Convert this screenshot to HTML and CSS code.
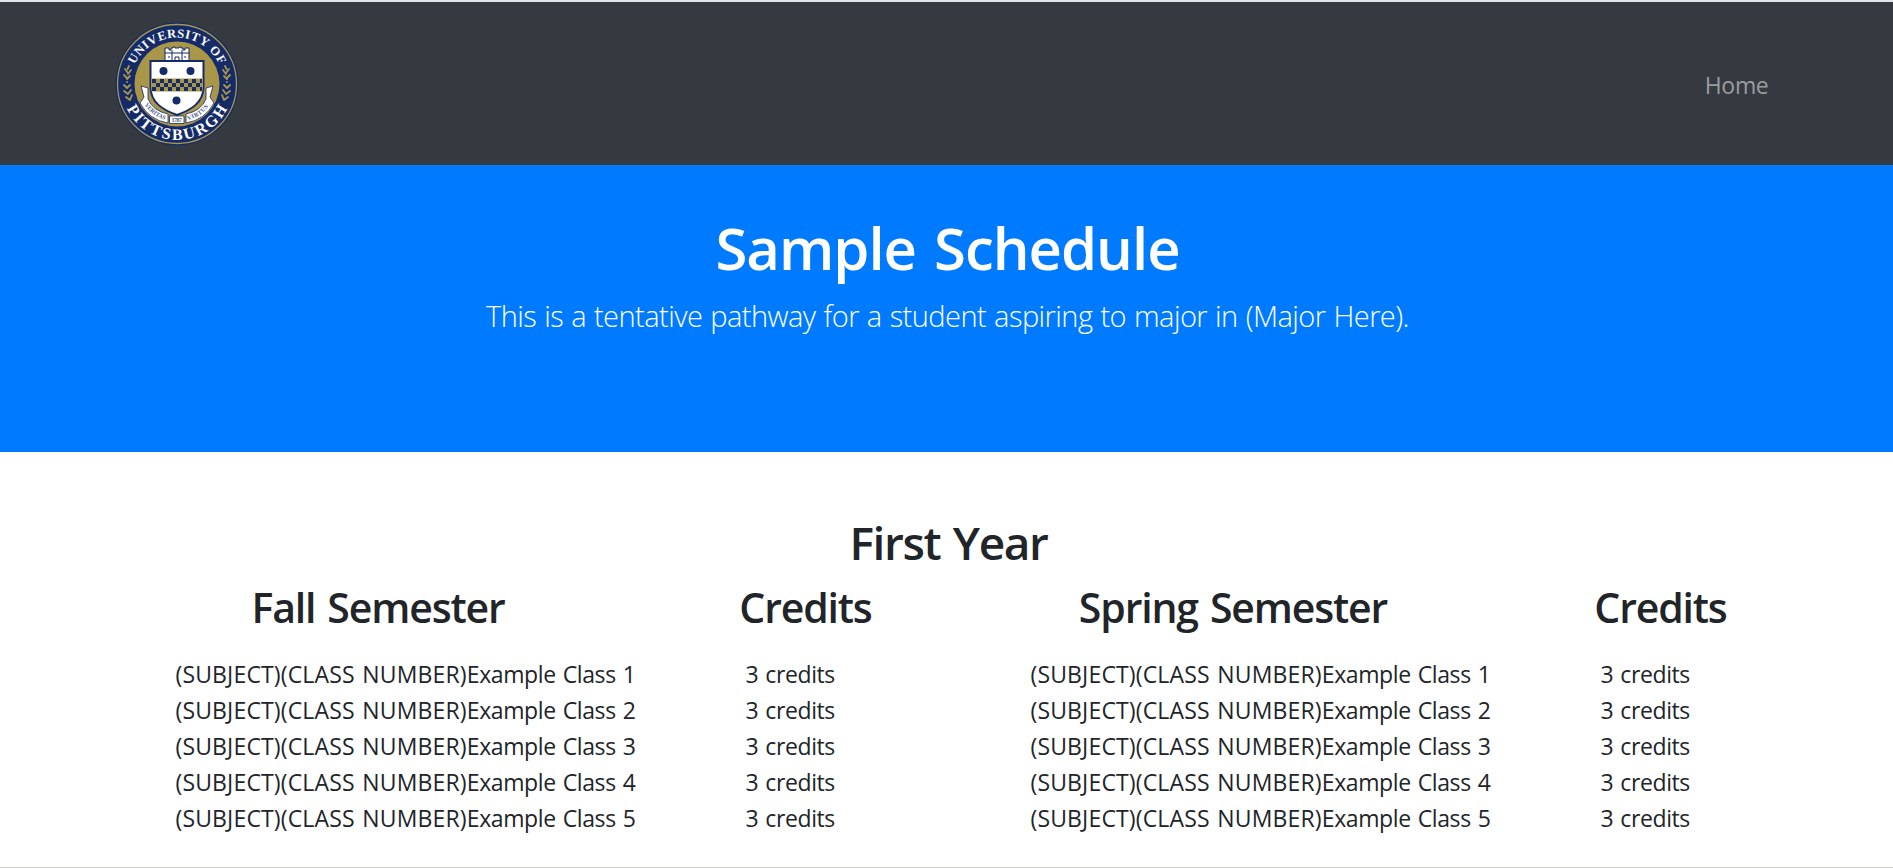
FILE: index.html
```html
<!DOCTYPE html>
<html lang="en">
<head>
<meta charset="utf-8">
<title>Sample Schedule</title>
<link rel="stylesheet" href="styles.css">
</head>
<body>
<nav class="navbar">
  <div class="container navbar-inner">
    <a class="brand" aria-label="University of Pittsburgh">
      <svg class="seal" viewBox="0 0 124 124">
        <defs>
          <path id="top-arc" d="M15.500 62a46.500 46.500 0 0 1 93 0"/>
          <path id="bottom-arc" d="M6 62a56 56 0 0 0 112 0"/>
          <path id="motto-left" d="M28.500 81Q36 94 52 98.500"/>
          <path id="motto-right" d="M72 98.500Q88 94 95.500 81"/>
          <pattern id="checks" width="8" height="8" patternUnits="userSpaceOnUse" x="37" y="57"><path fill="#142c68" d="M0 0h4v4h4v4h-4v-4h-4z"/></pattern>
        </defs>
        <circle cx="62" cy="62" r="61.500" fill="#142b67"/>
        <circle cx="62" cy="62" r="59.500" fill="none" stroke="#a8954f" stroke-width="1.300"/>
        <circle cx="62" cy="62" r="42.500" fill="#a99648"/>
        <text class="seal-top"><textPath href="#top-arc" startOffset="50%" text-anchor="middle" textLength="106">UNIVERSITY OF</textPath></text>
        <text class="seal-bottom"><textPath href="#bottom-arc" startOffset="50%" text-anchor="middle" textLength="125">PITTSBURGH</textPath></text>
        <g fill="none" stroke="#a99648" stroke-width="1.800" stroke-linecap="round">
          <path d="M14 44l-1.500 3M10 47l3 4M16 48l-3 4M9 53l3 3M15 54l-3 3M12 60l.1 0M9 63l3 3M15 63l-3 3M9 69l4 3M16 68l-3 4M11 75l4 3M17 73l-2 5"/>
          <path d="M110 44l1.500 3M114 47l-3 4M108 48l3 4M115 53l-3 3M109 54l3 3M112 60l-.1 0M115 63l-3 3M109 63l3 3M115 69l-4 3M108 68l3 4M113 75l-4 3M107 73l2 5"/>
        </g>
        <path d="M50 40V26h4v2h2v-2h2v-1h2v1h4v-1h2v1h2v2h2v-2h4v14z" fill="#fff" stroke="#142b67"/>
        <path d="M50 31h7M67 31h7M57 28v11M67 28v11M57 31h10M60 40v-5h4v5M53 35h2M69 35h2" fill="none" stroke="#142b67"/>
        <path d="M35.500 39h53v26c0 16-13 23-26.500 28C48.500 88 35.500 81 35.500 65z" fill="#fff" stroke="#142b67" stroke-width="2"/>
        <path d="M36.500 56.500h51v13h-51z" fill="#a99648"/>
        <path d="M37 57h50v12H37z" fill="url(#checks)"/>
        <g fill="#142b67"><circle cx="48.500" cy="49" r="4"/><circle cx="75.500" cy="49" r="4"/><circle cx="61.500" cy="78.500" r="4"/></g>
        <path d="M29 75L26 64l7 2v11q5 12 20 15v9Q34 98 25 81zM95 75l3-11-7 2v11q-5 12-20 15v9Q90 98 99 81z" fill="#fff" stroke="#142b67" stroke-width=".8"/>
        <path d="M54.500 94h14.500v7.500H54.500z" fill="#fff" stroke="#142b67" stroke-width=".8"/>
        <text class="seal-motto"><textPath href="#motto-left" textLength="26" startOffset="2">VERITAS</textPath></text>
        <text class="seal-motto"><textPath href="#motto-right" textLength="25" startOffset="1">VIRTUS</textPath></text>
        <text class="seal-motto" x="56.500" y="99.800" textLength="10.500">1787</text>
      </svg>
    </a>
    <a class="nav-link">Home</a>
  </div>
</nav>
<header class="hero">
  <h1>Sample Schedule</h1>
  <p class="lead">This is a tentative pathway for a student aspiring to major in (Major Here).</p>
</header>
<main class="container schedule">
  <h2>First Year</h2>
  <div class="semesters">
    <section class="col">
      <h3>Fall Semester</h3>
      <ul>
        <li><span class="code">(SUBJECT)(CLASS NUMBER)</span>Example Class 1</li>
        <li><span class="code">(SUBJECT)(CLASS NUMBER)</span>Example Class 2</li>
        <li><span class="code">(SUBJECT)(CLASS NUMBER)</span>Example Class 3</li>
        <li><span class="code">(SUBJECT)(CLASS NUMBER)</span>Example Class 4</li>
        <li><span class="code">(SUBJECT)(CLASS NUMBER)</span>Example Class 5</li>
      </ul>
    </section>
    <section class="col">
      <h3>Credits</h3>
      <ul><li>3 credits</li><li>3 credits</li><li>3 credits</li><li>3 credits</li><li>3 credits</li></ul>
    </section>
    <section class="col">
      <h3>Spring Semester</h3>
      <ul>
        <li><span class="code">(SUBJECT)(CLASS NUMBER)</span>Example Class 1</li>
        <li><span class="code">(SUBJECT)(CLASS NUMBER)</span>Example Class 2</li>
        <li><span class="code">(SUBJECT)(CLASS NUMBER)</span>Example Class 3</li>
        <li><span class="code">(SUBJECT)(CLASS NUMBER)</span>Example Class 4</li>
        <li><span class="code">(SUBJECT)(CLASS NUMBER)</span>Example Class 5</li>
      </ul>
    </section>
    <section class="col">
      <h3>Credits</h3>
      <ul><li>3 credits</li><li>3 credits</li><li>3 credits</li><li>3 credits</li><li>3 credits</li></ul>
    </section>
  </div>
</main>
</body>
</html>
```
FILE: styles.css
```css
* { box-sizing: border-box; }
body {
  margin: 0;
  height: 868px;
  overflow: hidden;
  display: flex;
  flex-direction: column;
  border-top: 2px solid #e3e7ea;
  border-bottom: 1px solid #cfcfcb;
  background: #fff;
  color: #212529;
  font: 400 23px/36px "Open Sans", "Noto Sans", sans-serif;
}
.container { width: 1710px; margin: 0 auto; }
.navbar { height: 163px; flex: none; background: #343a40; }
.navbar-inner { height: 100%; display: flex; align-items: center; justify-content: space-between; padding: 0 33px 0 23px; }
.brand, .seal { display: block; }
.seal { width: 124px; height: 124px; }
.seal text { fill: #fff; font-family: "Liberation Serif", serif; font-weight: 700; }
.seal .seal-top { font-size: 12.5px; }
.seal .seal-bottom { font-size: 16px; }
.seal .seal-motto { fill: #4b5c89; font-size: 6px; }
.nav-link { color: #9a9da0; letter-spacing: -0.3px; padding-top: 3px; }
.hero { height: 287px; flex: none; padding-top: 47px; background: #007bff; color: #fff; text-align: center; }
h1, h2, h3, ul, p { margin: 0; }
h1, h2, h3 { font-weight: 600; white-space: nowrap; text-align: center; }
h1 { font-size: 58px; line-height: 72px; letter-spacing: -1px; word-spacing: 4px; padding-left: 2px; }
.lead { margin-top: 9px; padding-left: 2px; font-size: 29px; line-height: 45px; font-weight: 300; letter-spacing: -0.55px; word-spacing: 1px; }
.schedule { padding-top: 61px; }
h2 { font-size: 46px; line-height: 58px; letter-spacing: -1.4px; word-spacing: 2px; padding-left: 4px; }
.semesters { display: grid; grid-template-columns: 570px 285px 570px 285px; }
h3 { font-size: 41px; line-height: 50px; padding: 11px 0 24px 3px; letter-spacing: -1.15px; word-spacing: 2.5px; }
ul { list-style: none; padding: 0 0 0 84px; }
li { white-space: nowrap; letter-spacing: -0.4px; word-spacing: 1.5px; }
.code { letter-spacing: 0.15px; }
```
